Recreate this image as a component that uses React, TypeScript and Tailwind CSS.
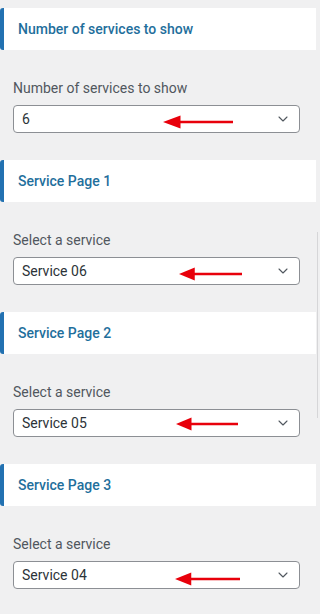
import { ChevronDown } from "lucide-react";

type Section = {
  title: string;
  label: string;
  value: string;
  arrowLeft: string;
  arrowTop: string;
  arrowWidth: string;
};

const sections: Section[] = [
  {
    title: "Number of services to show",
    label: "Number of services to show",
    value: "6",
    arrowLeft: "left-[149px]",
    arrowTop: "top-[9px]",
    arrowWidth: "w-[70px]",
  },
  {
    title: "Service Page 1",
    label: "Select a service",
    value: "Service 06",
    arrowLeft: "left-[165px]",
    arrowTop: "top-[9px]",
    arrowWidth: "w-[63px]",
  },
  {
    title: "Service Page 2",
    label: "Select a service",
    value: "Service 05",
    arrowLeft: "left-[162px]",
    arrowTop: "top-[7px]",
    arrowWidth: "w-[62px]",
  },
  {
    title: "Service Page 3",
    label: "Select a service",
    value: "Service 04",
    arrowLeft: "left-[161px]",
    arrowTop: "top-[10px]",
    arrowWidth: "w-[65px]",
  },
];

function RedArrow({ className }: { className: string }) {
  return (
    <svg
      viewBox="0 0 64 14"
      preserveAspectRatio="none"
      className={`absolute h-[14px] ${className}`}
    >
      <polygon points="0,7 16,0.5 16,13.5" fill="#e8000b" />
      <line x1="14" y1="7" x2="64" y2="7" stroke="#e8000b" strokeWidth="2.6" />
    </svg>
  );
}

function SectionBlock({ section }: { section: Section }) {
  return (
    <div className="flex flex-col">
      <div className="flex h-[42px] items-center rounded-l-[3px] border-l-4 border-[#2271b1] bg-white pl-[14px]">
        <h3 className="text-[14px] font-medium text-[#1f6f9c]">{section.title}</h3>
      </div>
      <div className="flex flex-col gap-[7px] pt-[28px] pr-[16px] pl-[13px]">
        <label className="text-[14px] leading-[20px] text-[#50575e]">{section.label}</label>
        <div className="relative flex h-[28px] items-center justify-between rounded-[4px] border border-[#8c8f94] bg-white pr-[8px] pl-[8px]">
          <span className="text-[14px] text-[#2c3338]">{section.value}</span>
          <ChevronDown size={16} strokeWidth={1.6} className="text-[#50575e]" />
          <RedArrow className={`${section.arrowLeft} ${section.arrowTop} ${section.arrowWidth}`} />
        </div>
      </div>
    </div>
  );
}

export default function App() {
  return (
    <div
      className="relative h-[614px] w-[320px] overflow-hidden bg-[#f0f0f1] pt-[8px] pr-[4px]"
      style={{ fontFamily: "Roboto, 'Liberation Sans', sans-serif" }}
    >
      <div className="flex flex-col gap-[27px]">
        {sections.map((section) => (
          <SectionBlock key={section.title} section={section} />
        ))}
      </div>
      <div className="absolute top-[232px] right-[2px] h-[186px] w-px bg-[#d6d6d8]"></div>
    </div>
  );
}
